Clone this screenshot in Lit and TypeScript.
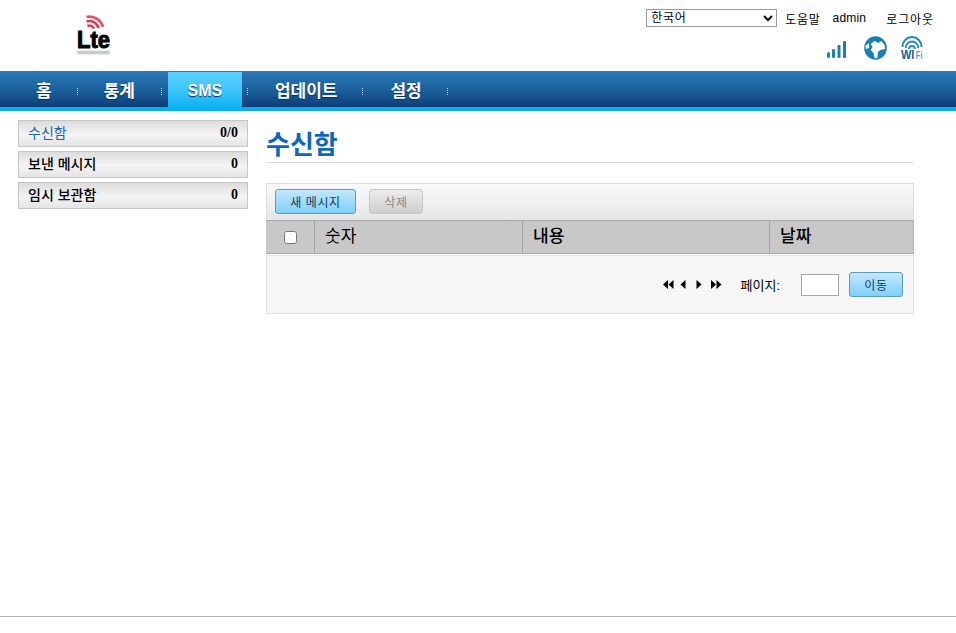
import { LitElement, html, css, svg } from "lit";
import { customElement } from "lit/decorators.js";

@customElement("app-root")
export class AppRoot extends LitElement {
  static styles = css`
    :host { display: flex; flex-direction: column; height: 633px; background: #fff; color: #000; font-family: "Liberation Sans", "Noto Sans CJK KR", sans-serif; font-size: 12px; overflow: hidden; }
    .header { height: 71px; display: flex; justify-content: space-between; flex: none; }
    .logo { margin: 15px 0 0 74px; width: 42px; height: 40px; }
    .logo svg { display: block; }
    .tools { display: flex; flex-direction: column; align-items: flex-end; padding: 9px 22px 0 0; }
    .links { display: flex; align-items: center; height: 18px; }
    select { width: 131px; height: 18px; box-sizing: border-box; border: 1px solid #999; border-radius: 0; background: #fff; font: 12px "Liberation Sans", "Noto Sans CJK KR", sans-serif; letter-spacing: 0.7px; color: #000; padding: 0; margin-right: 8px; }
    .links span { margin-right: 12px; white-space: nowrap; letter-spacing: 0.7px; }
    .links span.en { letter-spacing: 0.2px; margin-right: 20px; }
    .links span.out { margin: 0; letter-spacing: 0.9px; }
    .icons { display: flex; align-items: center; margin: 9px 11px 0 0; }
    .icons svg { display: block; overflow: visible; }
    .sig { margin: 3px 18px 0 0; }
    .globe { margin-right: 14px; }
    .nav { flex: none; height: 40px; box-sizing: border-box; border-bottom: 4px solid #12ace8; background: linear-gradient(#2a78b5, #1c629f 50%, #0e3e78); display: flex; align-items: stretch; padding-left: 10px; }
    .item { display: flex; align-items: center; padding: 0 26px; color: #fff; font-size: 17px; font-weight: 700; text-shadow: 0 1px 1px #0a2c55; white-space: nowrap; }
    .item.first { padding-right: 25px; }
    .item.after { padding-left: 27px; padding-right: 25px; }
    .item.active { width: 74px; box-sizing: border-box; padding: 0 0 2px; font-size: 16px; justify-content: center; margin: 1px 5px 0 6px; height: 39px; background: linear-gradient(#5cd0ff, #3cc4fb 50%, #01aeef); }
    .sep { width: 1px; margin: 17px 0 11px; background-image: linear-gradient(#b9d3e8 50%, transparent 50%); background-size: 1px 2px; }
    .body { flex: 1; display: flex; min-height: 0; }
    .side { width: 230px; margin: 9px 18px 0 18px; display: flex; flex-direction: column; gap: 4px; }
    .side-item { height: 27px; box-sizing: border-box; border: 1px solid #c6c6c6; background: linear-gradient(#dcdcdc, #f4f4f4 55%, #e4e4e4); display: flex; justify-content: space-between; align-items: center; padding: 0 9px 1px; font-size: 14px; font-weight: 500; }
    .side-item span { margin-bottom: 3px; }
    .side-item.on { color: #1e64b4; font-weight: 400; }
    .side-item b { color: #000; font-family: "Liberation Serif", serif; font-size: 14px; }
    .main { width: 648px; }
    h1 { margin: 0; height: 52px; box-sizing: border-box; padding-top: 16px; border-bottom: 1px solid #dcdcdc; font-size: 26px; line-height: 36px; color: #0b66bd; font-weight: 700; }
    .toolbar { margin-top: 20px; height: 37px; box-sizing: border-box; border: 1px solid #dedede; border-bottom: 0; background: linear-gradient(#fafafa, #e6e6e6); display: flex; padding: 5px 0 0 8px; gap: 13px; }
    .btn { height: 25px; box-sizing: border-box; border-radius: 3px; display: flex; align-items: center; justify-content: center; font-size: 12px; letter-spacing: 0.6px; }
    .blue { border: 1px solid #5d9cc4; background: linear-gradient(#c3e7fb, #7fd0fb); color: #16395a; }
    .new { width: 81px; }
    .del { width: 54px; border: 1px solid #c8c8c8; background: linear-gradient(#ececec, #cfcfcf); color: #8a8a8a; }
    .thead { height: 34px; box-sizing: border-box; border: 1px solid #a9a9a9; border-color: #a9a9a9 #b5b5b5 #a9a9a9 #c8c8c8; background: #c8c8c8; display: grid; grid-template-columns: 47px 208px 247px 1fr; font-size: 17px; font-weight: 500; }
    .th { display: flex; align-items: center; padding: 0 0 5px 10px; border-left: 1px solid #a4a4a4; }
    .th:first-child { border: 0; padding: 0; justify-content: center; }
    .th input { width: 13px; height: 13px; margin: 0; }
    .th.lt { font-weight: 400; }
    .pager { margin-top: 1px; height: 59px; box-sizing: border-box; border: 1px solid #e2e2e2; background: #f6f6f6; display: flex; align-items: center; justify-content: flex-end; padding-right: 10px; }
    .pager svg { display: block; margin-right: 19px; }
    .pager label { font-size: 13px; margin-right: 21px; }
    .pager input { width: 38px; height: 22px; box-sizing: border-box; border: 1px solid #a8a8a8; background: #fff; margin: 0 10px 0 0; padding: 0; }
    .go { width: 54px; }
    .foot { flex: none; height: 17px; box-sizing: border-box; border-top: 1px solid #b4b4b4; }
  `;

  private logo() {
    return html`<svg width="42" height="40" viewBox="0 0 42 40">
      <defs><filter id="bl" x="-10%" y="-100%" width="120%" height="300%"><feGaussianBlur stdDeviation="0.8"/></filter></defs>
      <g fill="none" stroke-linecap="butt">
        <path d="M13.5 11 A5 5 0 0 1 20 13.5" stroke="#d8404f" stroke-width="2.6"/>
        <path d="M12.5 6.5 A9.5 9.5 0 0 1 24.5 13" stroke="#d8404f" stroke-width="2.6"/>
        <path d="M12.5 2 A14 14 0 0 1 29 12" stroke="#e2566a" stroke-width="2.8"/>
      </g>
      <text x="3" y="33" font-family="Liberation Sans" font-weight="700" font-size="23" textLength="33" lengthAdjust="spacingAndGlyphs" fill="#000" stroke="#000" stroke-width="1">Lte</text>
      <rect x="3" y="36.5" width="33" height="2" fill="#999" filter="url(#bl)"/>
    </svg>`;
  }

  private tri(dir: number, x: number) {
    const pts = dir > 0 ? `${x},0 ${x + 5},4.5 ${x},9` : `${x + 5},0 ${x},4.5 ${x + 5},9`;
    return svg`<polygon points=${pts} fill="#000"/>`;
  }

  render() {
    return html`
      <div class="header">
        <div class="logo">${this.logo()}</div>
        <div class="tools">
          <div class="links">
            <select><option>한국어</option></select>
            <span>도움말</span><span class="en">admin</span><span class="out">로그아웃</span>
          </div>
          <div class="icons">
            <svg class="sig" width="19" height="17" viewBox="0 0 19 17" fill="#1b7fb4">
              <rect x="0" y="11" width="3" height="6" rx="1.5"/>
              <rect x="5" y="8" width="3" height="9" rx="1.2"/>
              <rect x="10.5" y="4" width="3" height="13" rx="1"/>
              <rect x="16" y="0" width="3" height="17" rx="1"/>
            </svg>
            <svg class="globe" width="23" height="24" viewBox="0 0 24 24" preserveAspectRatio="none">
              <circle cx="12" cy="12" r="11.8" fill="#1b7fb4"/>
              <path d="M7 8 L11 5 L15 7 L18 5 L21.5 9 L22 13 L17 14 L14.5 16 L14 22 L11 22 L10 17 L7 14 L9 11z M1.5 10 L5 7 L5.5 12 L2 13z" fill="#fff"/>
            </svg>
            <svg width="22" height="24" viewBox="0 0 23 24" preserveAspectRatio="none">
              <g fill="none" stroke="#2a89bb" stroke-width="2">
                <path d="M1.5 11 A10 10 0 0 1 21.5 11"/>
                <path d="M5 12 A6.5 6.5 0 0 1 18 12"/>
                <path d="M8.5 13 A3 3 0 0 1 14.5 13"/>
              </g>
              <text x="0" y="23" font-family="Liberation Sans" font-weight="700" font-size="12" fill="#14618f" textLength="14" lengthAdjust="spacingAndGlyphs">WI</text>
              <text x="15.5" y="23" font-family="Liberation Sans" font-weight="700" font-size="11" fill="#5a9dc0" textLength="7" lengthAdjust="spacingAndGlyphs">Fi</text>
            </svg>
          </div>
        </div>
      </div>
      <div class="nav">
        <div class="item first">홈</div><div class="sep"></div>
        <div class="item">통계</div><div class="sep"></div>
        <div class="item active">SMS</div><div class="sep"></div>
        <div class="item after">업데이트</div><div class="sep"></div>
        <div class="item after">설정</div><div class="sep"></div>
      </div>
      <div class="body">
        <div class="side">
          <div class="side-item on"><span>수신함</span><b>0/0</b></div>
          <div class="side-item"><span>보낸 메시지</span><b>0</b></div>
          <div class="side-item"><span>임시 보관함</span><b>0</b></div>
        </div>
        <div class="main">
          <h1>수신함</h1>
          <div class="toolbar">
            <div class="btn blue new">새 메시지</div>
            <div class="btn del">삭제</div>
          </div>
          <div class="thead">
            <div class="th"><input type="checkbox" /></div>
            <div class="th lt">숫자</div>
            <div class="th">내용</div>
            <div class="th">날짜</div>
          </div>
          <div class="pager">
            <svg width="59" height="9" viewBox="0 0 59 9">
              ${this.tri(-1, 0)}${this.tri(-1, 5.5)}${this.tri(-1, 17.5)}${this.tri(1, 33.5)}${this.tri(1, 48)}${this.tri(1, 53.5)}
            </svg>
            <label>페이지:</label>
            <input type="text" />
            <div class="btn blue go">이동</div>
          </div>
        </div>
      </div>
      <div class="foot"></div>
    `;
  }
}
